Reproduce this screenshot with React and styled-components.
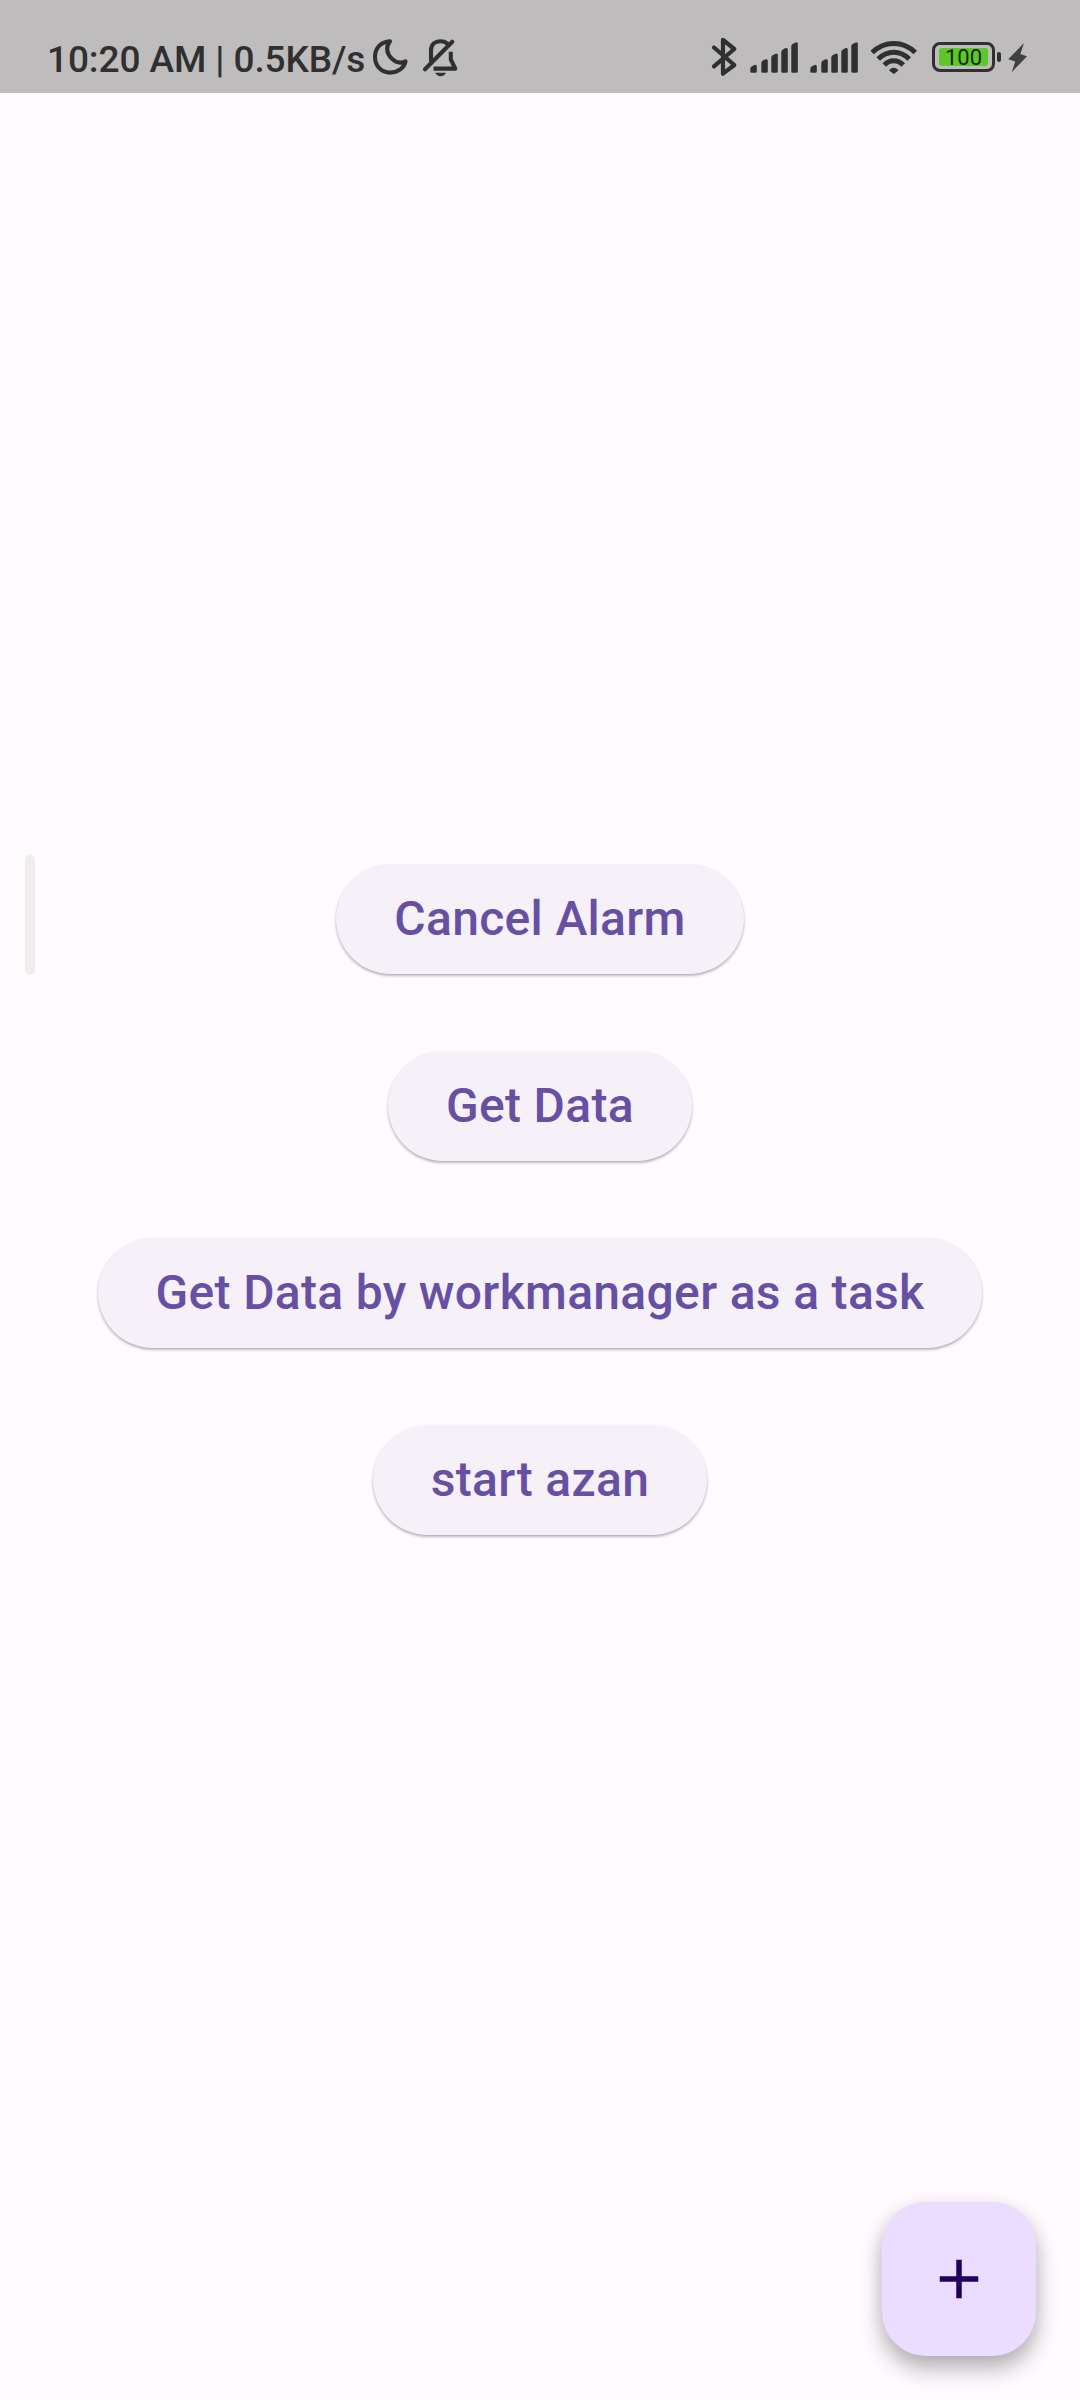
import React from "react";
import styled, { createGlobalStyle } from "styled-components";

const ink = "#303030";

const GlobalStyle = createGlobalStyle`
  body {
    margin: 0;
    background: #fffbff;
    font-family: Roboto, "Liberation Sans", sans-serif;
  }
`;

const Screen = styled.div`
  position: relative;
  display: flex;
  flex-direction: column;
  width: 1080px;
  height: 2400px;
  overflow: hidden;
  background: #fffbff;
`;

const StatusBar = styled.header`
  display: flex;
  justify-content: space-between;
  box-sizing: border-box;
  flex: none;
  height: 93px;
  padding: 36px 52px 0 47px;
  background: #bfbcbe;
  color: ${ink};
`;

const StatusGroup = styled.div`
  display: flex;
  align-items: flex-start;
  gap: ${(p) => p.$gap}px;
`;

const Clock = styled.span`
  width: 325px;
  font-size: 37px;
  font-weight: 500;
  line-height: 47px;
  letter-spacing: -0.1px;
  white-space: nowrap;
`;

const Glyph = styled.svg`
  display: block;
  flex: none;
  width: ${(p) => p.$w}px;
  height: 42px;
  overflow: visible;
`;

const Battery = styled.div`
  display: flex;
  align-items: center;
  gap: 2px;
  height: 30px;
  margin: 6px 0 0 3px;
`;

const BatteryShell = styled.div`
  box-sizing: border-box;
  width: 63px;
  height: 30px;
  padding: 3px 4px;
  border: 3px solid ${ink};
  border-radius: 8px;
`;

const BatteryLevel = styled.div`
  width: 49px;
  height: 18px;
  border-radius: 3px;
  background: #5fc62a;
  color: #142b09;
  font-size: 22px;
  line-height: 20px;
  text-align: center;
`;

const BatteryTip = styled.div`
  width: 4px;
  height: 10px;
  border-radius: 2px;
  background: ${ink};
`;

const Actions = styled.main`
  display: flex;
  flex: 1;
  flex-direction: column;
  align-items: center;
  gap: 77px;
  padding-top: 771px;
`;

const ActionButton = styled.button`
  height: 110px;
  padding: 0 58px;
  border: 0;
  border-radius: 55px;
  background: #f6f1f9;
  box-shadow: 0 2px 3px rgba(0, 0, 0, 0.24), 0 1px 2px rgba(0, 0, 0, 0.1);
  color: #6750a4;
  font-family: inherit;
  font-size: 48px;
  font-weight: 500;
  line-height: 66px;
  letter-spacing: 0.32px;
  white-space: nowrap;
`;

const EdgeHandle = styled.div`
  position: absolute;
  top: 855px;
  left: 25px;
  width: 10px;
  height: 120px;
  border-radius: 5px;
  background: #efeeee;
`;

const Fab = styled.button`
  position: absolute;
  right: 44px;
  bottom: 44px;
  display: flex;
  align-items: center;
  justify-content: center;
  width: 154px;
  height: 154px;
  padding: 0;
  border: 0;
  border-radius: 44px;
  background: #eaddff;
  box-shadow: 0 13px 23px rgba(0, 0, 0, 0.28), 0 3px 18px rgba(0, 0, 0, 0.07);
  color: #21005d;
`;

const FabIcon = styled.svg`
  width: 66px;
  height: 66px;
`;

const Moon = () => (
  <Glyph $w={36} viewBox="372 36 36 42">
    <path
      d="M390 41.4C381 41.7 375 48 375 57C375 66 381.5 72.6 390 72.6C398 72.6 404.1 68 405.5 61.3C401 63.5 396 62.8 391.8 58.6C386.5 53.5 385.5 46.5 390 41.4Z"
      fill="none" stroke={ink} strokeWidth="4.1" strokeLinejoin="round"
    />
  </Glyph>
);

const BellOff = () => (
  <Glyph $w={36} viewBox="423 36 36 42">
    <g fill="none" stroke={ink} strokeWidth="4.1" strokeLinecap="round" strokeLinejoin="round">
      <path d="M425 69.3L452.3 41.7" />
      <path d="M431 61V50.5C431 44.5 435 41.2 440.5 41.2C443.5 41.2 446 42.2 447.8 44" />
      <path d="M450.8 51.8V59.5L455.3 68.6H433.5" strokeLinecap="butt" />
    </g>
    <path d="M435.2 72.7H446C445 75 443 76.2 440.6 76.2S436.3 75 435.2 72.7Z" fill={ink} />
  </Glyph>
);

const Bluetooth = () => (
  <Glyph $w={26} viewBox="712 36 26 42">
    <path
      d="M714 47.5L734.3 65L723 73.7V39.8L734.3 49L714 66.3"
      fill="none" stroke={ink} strokeWidth="4.2" strokeLinecap="round" strokeLinejoin="round"
    />
  </Glyph>
);

const signalBars = [
  [0, 28.8],
  [11, 23.2],
  [21, 17.6],
  [31, 12],
  [41, 6.3],
];

const Signal = () => (
  <Glyph $w={48} viewBox="0 0 48 42">
    {signalBars.map(([x, y]) => (
      <path
        key={x}
        d={`M${x + 0.3} ${y + 4}Q${x + 0.4} ${y + 2.2} ${x + 2} ${y + 1.4}L${x + 4.6} ${y + 0.1}Q${x + 6.8} ${y - 0.6} ${x + 6.8} ${y + 1.6}V35.2Q${x + 6.8} 36.8 ${x + 5.2} 36.8H${x + 1.9}Q${x + 0.3} 36.8 ${x + 0.3} 35.2Z`}
        fill={ink}
      />
    ))}
  </Glyph>
);

const Wifi = () => (
  <Glyph $w={47} viewBox="870 36 47 42">
    <g fill="none" stroke={ink} strokeWidth="5">
      <path d="M872.2 52.5C884.5 40.4 903 40.4 915.3 52.5" />
      <path d="M878.2 59C887.2 49.9 900.3 49.9 909.3 59" />
      <path d="M884.3 65C889.8 59.4 897.7 59.4 903.2 65" />
    </g>
    <path
      d="M890 70.2C892.3 67.9 895.2 67.9 897.5 70.2L893.8 73.2Z"
      fill={ink} stroke={ink} strokeWidth="1.6" strokeLinejoin="round"
    />
  </Glyph>
);

const Bolt = () => (
  <Glyph $w={20} viewBox="1008 36 20 42">
    <path d="M1024 43L1008.2 59.2L1015.2 61.5L1011.7 72.2L1027 56.2L1020.3 54Z" fill="#404040" />
  </Glyph>
);

const labels = ["Cancel Alarm", "Get Data", "Get Data by workmanager as a task", "start azan"];

export default function App() {
  return (
    <Screen>
      <GlobalStyle />
      <StatusBar>
        <StatusGroup $gap={0}>
          <Clock>10:20 AM | 0.5KB/s</Clock>
          <StatusGroup $gap={15}>
            <Moon />
            <BellOff />
          </StatusGroup>
        </StatusGroup>
        <StatusGroup $gap={12}>
          <Bluetooth />
          <Signal />
          <Signal />
          <Wifi />
          <StatusGroup $gap={7}>
            <Battery>
              <BatteryShell>
                <BatteryLevel>100</BatteryLevel>
              </BatteryShell>
              <BatteryTip />
            </Battery>
            <Bolt />
          </StatusGroup>
        </StatusGroup>
      </StatusBar>
      <Actions>
        {labels.map((label) => (
          <ActionButton key={label}>{label}</ActionButton>
        ))}
      </Actions>
      <EdgeHandle />
      <Fab aria-label="Add">
        <FabIcon viewBox="0 0 24 24" fill="currentColor">
          <path d="M19 13h-6v6h-2v-6H5v-2h6V5h2v6h6z" />
        </FabIcon>
      </Fab>
    </Screen>
  );
}
